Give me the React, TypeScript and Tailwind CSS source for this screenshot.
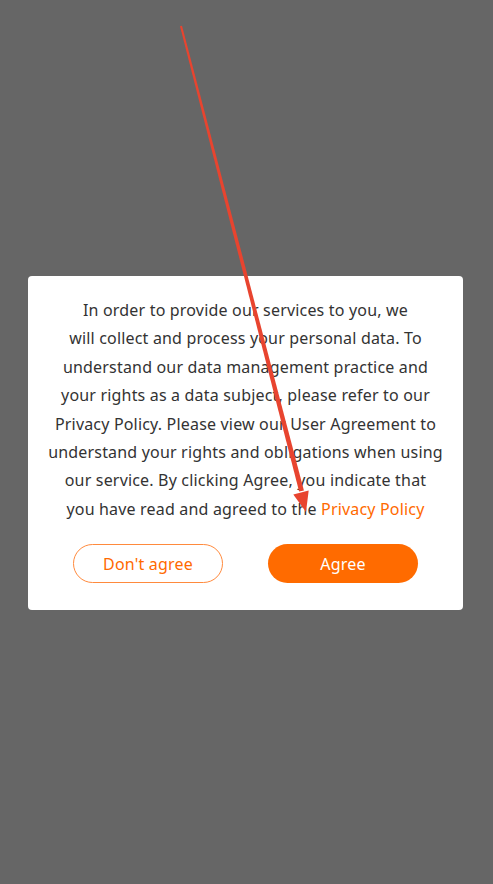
import React from "react";

const lines = [
  "In order to provide our services to you, we",
  "will collect and process your personal data. To",
  "understand our data management practice and",
  "your rights as a data subject, please refer to our",
  "Privacy Policy. Please view our User Agreement to",
  "understand your rights and obligations when using",
  "our service. By clicking Agree, you indicate that",
];

const Arrow: React.FC = () => (
  <svg
    className="absolute left-0 top-0 pointer-events-none"
    width={493}
    height={884}
    viewBox="0 0 493 884"
  >
    <polygon
      points="180,26.3 182,25.7 303.9,490.4 299.1,491.6"
      fill="#e8442f"
    />
    <polygon points="306,512 308.7,490.6 293.3,494.6" fill="#e8442f" />
  </svg>
);

export default function App() {
  return (
    <div
      className="relative w-[493px] h-[884px] overflow-hidden bg-[#666666]"
      style={{ fontFamily: '"Noto Sans", "Open Sans", sans-serif' }}
    >
      <div className="ml-[28px] mt-[276px] w-[435px] rounded-[4px] bg-white pt-[20px] pb-[27px]">
        <div className="text-center text-[16px] leading-[28.4px] tracking-[0.18px] text-[#333333]">
          {lines.map((l, i) => (
            <div key={i}>{l}</div>
          ))}
          <div>
            you have read and agreed to the{" "}
            <span className="text-[#ff6a00]">Privacy Policy</span>
          </div>
        </div>
        <div className="mt-[21px] flex justify-center gap-[45px]">
          <button className="h-[39px] w-[150px] rounded-full border border-[#ff8a3d] bg-white text-[16px] tracking-[0.18px] text-[#ff6a00]">
            Don't agree
          </button>
          <button className="h-[39px] w-[150px] rounded-full bg-[#ff6b00] text-[16px] tracking-[0.18px] text-white">
            Agree
          </button>
        </div>
      </div>
      <Arrow />
    </div>
  );
}
